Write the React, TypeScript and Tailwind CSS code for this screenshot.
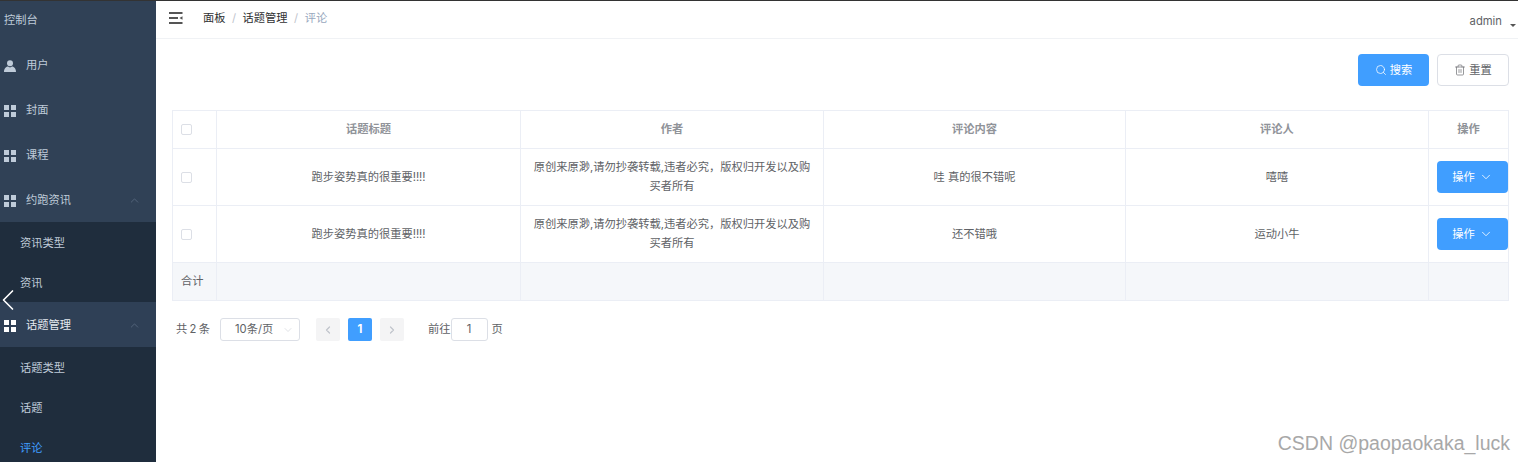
import { ChevronDown, ChevronLeft, ChevronRight, ChevronUp, Search, Trash2 } from "lucide-react";

const FONT = "font-['Inter','Noto_Sans_CJK_SC',sans-serif]";

function GridIcon({ white }: { white?: boolean }) {
  const c = white ? "bg-white" : "bg-[#bfcbd9]";
  return (
    <span className="grid w-[12px] h-[12px] grid-cols-2 gap-[2px] shrink-0">
      <span className={c} />
      <span className={c} />
      <span className={c} />
      <span className={c} />
    </span>
  );
}

function UserIcon() {
  return (
    <svg width="12" height="12" viewBox="0 0 12 12" className="shrink-0">
      <circle cx="6" cy="3.2" r="3" fill="#bfcbd9" />
      <path d="M0 12 C0 7.6 2.6 6.6 4 6.4 L6 7.6 L8 6.4 C9.4 6.6 12 7.6 12 12 Z" fill="#bfcbd9" />
    </svg>
  );
}

function MenuItem({ label, icon, open, active }: { label: string; icon: "user" | "grid"; open?: boolean; active?: boolean }) {
  return (
    <div className={`h-[45px] shrink-0 flex items-center pt-[2px] pl-[4px] pr-[15px] text-[11.25px] ${active ? "bg-[#2f4056] text-[#e4e9ef]" : "text-[#bfcbd9]"}`}>
      {icon === "user" ? <UserIcon /> : <GridIcon white={active} />}
      <span className="ml-[10px] flex-1">{label}</span>
      {open && <ChevronUp size={13} strokeWidth={1} className="text-[#6f8096]" />}
    </div>
  );
}

function SubItem({ label, active }: { label: string; active?: boolean }) {
  return (
    <div className={`h-[40px] flex items-center pt-[2px] pl-[20px] text-[11.25px] ${active ? "text-[#409eff]" : "text-[#bfcbd9]"}`}>{label}</div>
  );
}

function Sidebar() {
  return (
    <aside className="w-[156px] shrink-0 bg-[#304156] flex flex-col overflow-hidden">
      <div className="h-[38px] shrink-0 flex items-center pl-[4px] text-[11.25px] text-[#bfcbd9]">控制台</div>
      <div className="h-[3px] shrink-0" />
      <MenuItem label="用户" icon="user" />
      <MenuItem label="封面" icon="grid" />
      <MenuItem label="课程" icon="grid" />
      <MenuItem label="约跑资讯" icon="grid" open />
      <div className="bg-[#1f2d3d] shrink-0">
        <SubItem label="资讯类型" />
        <SubItem label="资讯" />
      </div>
      <MenuItem label="话题管理" icon="grid" open active />
      <div className="bg-[#1f2d3d] flex-1">
        <SubItem label="话题类型" />
        <SubItem label="话题" />
        <SubItem label="评论" active />
      </div>
    </aside>
  );
}

function Header() {
  return (
    <header className="h-[38px] shrink-0 flex items-center border-b border-[#f0f2f5] pl-[13px] pr-[2px] text-[11.25px]">
      <svg width="14" height="13" viewBox="0 0 14 13" className="mb-[3px] shrink-0">
        <path d="M0 0H13.5V2H0ZM0 5H9V7H0ZM0 10H13.5V12H0ZM13.5 4.2L10.4 6L13.5 7.8Z" fill="#555" />
      </svg>
      <nav className="ml-[20px] flex items-center mb-[3px]">
        <span className="text-[#303133]">面板</span>
        <span className="mx-[6.5px] text-[#c0c4cc]">/</span>
        <span className="text-[#303133]">话题管理</span>
        <span className="mx-[6.5px] text-[#c0c4cc]">/</span>
        <span className="text-[#97a8be]">评论</span>
      </nav>
      <div className="ml-auto flex items-center text-[#606266] mt-[4px]">
        admin
        <span className="ml-[8px] mt-[8px] w-0 h-0 border-x-[3px] border-x-transparent border-t-[3px] border-t-[#555]" />
      </div>
    </header>
  );
}

const ROWS = [
  { title: "跑步姿势真的很重要!!!!", content: "哇 真的很不错呢", person: "嘻嘻" },
  { title: "跑步姿势真的很重要!!!!", content: "还不错哦", person: "运动小牛" },
];

const AUTHOR = "原创来原渺,请勿抄袭转载,违者必究，版权归开发以及购买者所有";

function CheckBox() {
  return <span className="block w-[11px] h-[11px] border border-[#dcdfe6] rounded-[2px] bg-white" />;
}

function CommentTable() {
  const th = "border border-[#ebeef5] font-bold text-[#909399] text-center";
  const td = "border border-[#ebeef5] text-center px-[10px] leading-[19px]";
  const sum = "border border-[#ebeef5] bg-[#f5f7fa]";
  return (
    <table className="w-[1336px] table-fixed border-collapse text-[11.25px] text-[#606266]">
      <colgroup>
        <col className="w-[44px]" />
        <col className="w-[304px]" />
        <col className="w-[303px]" />
        <col className="w-[302px]" />
        <col className="w-[303px]" />
        <col className="w-[80px]" />
      </colgroup>
      <thead>
        <tr className="h-[38px]">
          <th className="border border-[#ebeef5] pl-[8px]"><CheckBox /></th>
          <th className={th}>话题标题</th>
          <th className={th}>作者</th>
          <th className={th}>评论内容</th>
          <th className={th}>评论人</th>
          <th className={th}>操作</th>
        </tr>
      </thead>
      <tbody>
        {ROWS.map((r) => (
          <tr key={r.person} className="h-[57px]">
            <td className="border border-[#ebeef5] pl-[8px]"><CheckBox /></td>
            <td className={td}>{r.title}</td>
            <td className={td}>{AUTHOR}</td>
            <td className={td}>{r.content}</td>
            <td className={td}>{r.person}</td>
            <td className="border border-[#ebeef5] pl-[8px] pr-0">
              <button className="w-[71px] h-[32px] rounded-[4px] bg-[#409eff] text-white text-[11.25px] flex items-center justify-center">
                操作
                <ChevronDown size={14} strokeWidth={1.4} className="ml-[4px]" />
              </button>
            </td>
          </tr>
        ))}
        <tr className="h-[38px]">
          <td className={`${sum} pl-[8px]`}>合计</td>
          <td className={sum} />
          <td className={sum} />
          <td className={sum} />
          <td className={sum} />
          <td className={sum} />
        </tr>
      </tbody>
    </table>
  );
}

function Pagination() {
  return (
    <div className="mt-[17px] ml-[4px] flex items-center text-[11.25px] text-[#606266] h-[23px]">
      <span className="w-[33px] whitespace-nowrap tracking-[-0.4px]">共 2 条</span>
      <div className="ml-[11px] w-[80px] h-[23px] border border-[#dcdfe6] rounded-[3px] flex items-center pl-[14px] pr-[5px]">
        <span className="flex-1">10条/页</span>
        <ChevronDown size={12} strokeWidth={1} className="text-[#c0c4cc]" />
      </div>
      <span className="ml-[16px] w-[24px] h-[23px] bg-[#f4f4f5] rounded-[2px] flex items-center justify-center text-[#c0c4cc]">
        <ChevronLeft size={12} strokeWidth={2.5} />
      </span>
      <span className="ml-[8px] w-[24px] h-[23px] bg-[#409eff] rounded-[2px] flex items-center justify-center text-white font-bold">1</span>
      <span className="ml-[8px] w-[24px] h-[23px] bg-[#f4f4f5] rounded-[2px] flex items-center justify-center text-[#c0c4cc]">
        <ChevronRight size={12} strokeWidth={2.5} />
      </span>
      <span className="ml-[24px]">前往</span>
      <span className="w-[37px] h-[23px] border border-[#dcdfe6] rounded-[3px] flex items-center justify-center">1</span>
      <span className="ml-[4px]">页</span>
    </div>
  );
}

export default function App() {
  return (
    <div className={`${FONT} relative w-[1518px] h-[462px] overflow-hidden bg-white border-t border-[#333]`}>
      <div className="flex h-full">
        <Sidebar />
        <main className="flex-1 flex flex-col min-w-0">
          <Header />
          <div className="flex justify-end gap-[8px] pr-[9px] pt-[15px]">
            <button className="w-[71px] h-[32px] rounded-[4px] bg-[#409eff] text-white text-[11.25px] flex items-center justify-center">
              <Search size={12} strokeWidth={1.5} className="mr-[3px]" />
              搜索
            </button>
            <button className="w-[72px] h-[32px] rounded-[4px] border border-[#dcdfe6] text-[#606266] text-[11.25px] flex items-center justify-center">
              <Trash2 size={12} strokeWidth={1.3} className="mr-[3px]" />
              重置
            </button>
          </div>
          <div className="mt-[24px] pl-[16px]">
            <CommentTable />
            <Pagination />
          </div>
        </main>
      </div>
      <ChevronLeft size={36} strokeWidth={1.1} className="absolute left-[-10px] top-[281px] text-white" />
      <span className="absolute right-[8px] top-[428px] font-['Liberation_Sans',sans-serif] text-[19.5px] text-[#a8a8a8]">CSDN @paopaokaka_luck</span>
    </div>
  );
}
